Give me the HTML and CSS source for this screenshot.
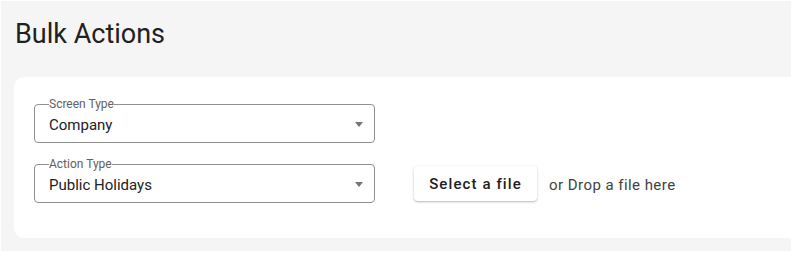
FILE: index.html
```html
<!DOCTYPE html>
<html>
<head>
    <meta charset="UTF-8">
    <title>Bulk Actions</title>
    <link rel="stylesheet" href="styles.css">
</head>
<body>
    <div class="page">
        <h1 class="page-title">Bulk Actions</h1>

        <div class="card">
            <fieldset class="select-field">
                <legend>Screen Type</legend>
                <div class="select-value">
                    <span>Company</span>
                    <span class="arrow"></span>
                </div>
            </fieldset>

            <div class="row">
                <fieldset class="select-field">
                    <legend>Action Type</legend>
                    <div class="select-value">
                        <span>Public Holidays</span>
                        <span class="arrow"></span>
                    </div>
                </fieldset>

                <div class="upload">
                    <button class="file-btn">Select a file</button>
                    <span class="drop-text">or Drop a file here</span>
                </div>
            </div>
        </div>
    </div>
</body>
</html>
```

FILE: styles.css
```css
body {
    margin: 0;
    background-color: #ffffff;
    font-family: Roboto, 'Liberation Sans', Arial, sans-serif;
}
.page {
    margin: 1px 1px 2px 1px;
    height: 250px;
    padding-left: 13px;
    background-color: #f5f5f5;
    overflow: hidden;
}
.page-title {
    margin: 17px 0 27px 1px;
    font-size: 27px;
    line-height: 32px;
    font-weight: 400;
    color: #212121;
}
.card {
    margin-right: -20px;
    padding: 20px 20px 35px 20px;
    background-color: #ffffff;
    border-radius: 10px;
}
.select-field {
    width: 341px;
    margin: 0;
    padding: 0 11px 0 14px;
    box-sizing: border-box;
    border: 1px solid #8f8f8f;
    border-radius: 4px;
}
.select-field legend {
    padding: 0;
    font-size: 12px;
    line-height: 14px;
    color: #616161;
}
.select-value {
    display: flex;
    align-items: center;
    justify-content: space-between;
    height: 27px;
    padding-bottom: 4px;
    font-size: 15px;
    color: #212121;
}
.arrow {
    width: 0;
    height: 0;
    border-left: 4px solid transparent;
    border-right: 4px solid transparent;
    border-top: 5px solid #757575;
}
.row {
    display: flex;
    align-items: flex-end;
    margin-top: 14px;
}
.upload {
    display: flex;
    align-items: center;
    margin-left: 39px;
    margin-bottom: 2px;
}
.file-btn {
    width: 123px;
    height: 35px;
    padding: 0;
    border: none;
    border-radius: 4px;
    background-color: #ffffff;
    box-shadow: 0 1px 3px rgba(0, 0, 0, 0.2), 0 1px 1px rgba(0, 0, 0, 0.1);
    font-family: Roboto, 'Liberation Sans', Arial, sans-serif;
    font-size: 15px;
    font-weight: 500;
    letter-spacing: 1.1px;
    color: #212121;
    cursor: pointer;
}
.drop-text {
    margin-left: 12px;
    padding-top: 3px;
    font-size: 15px;
    letter-spacing: 0.45px;
    color: #424242;
}
```
